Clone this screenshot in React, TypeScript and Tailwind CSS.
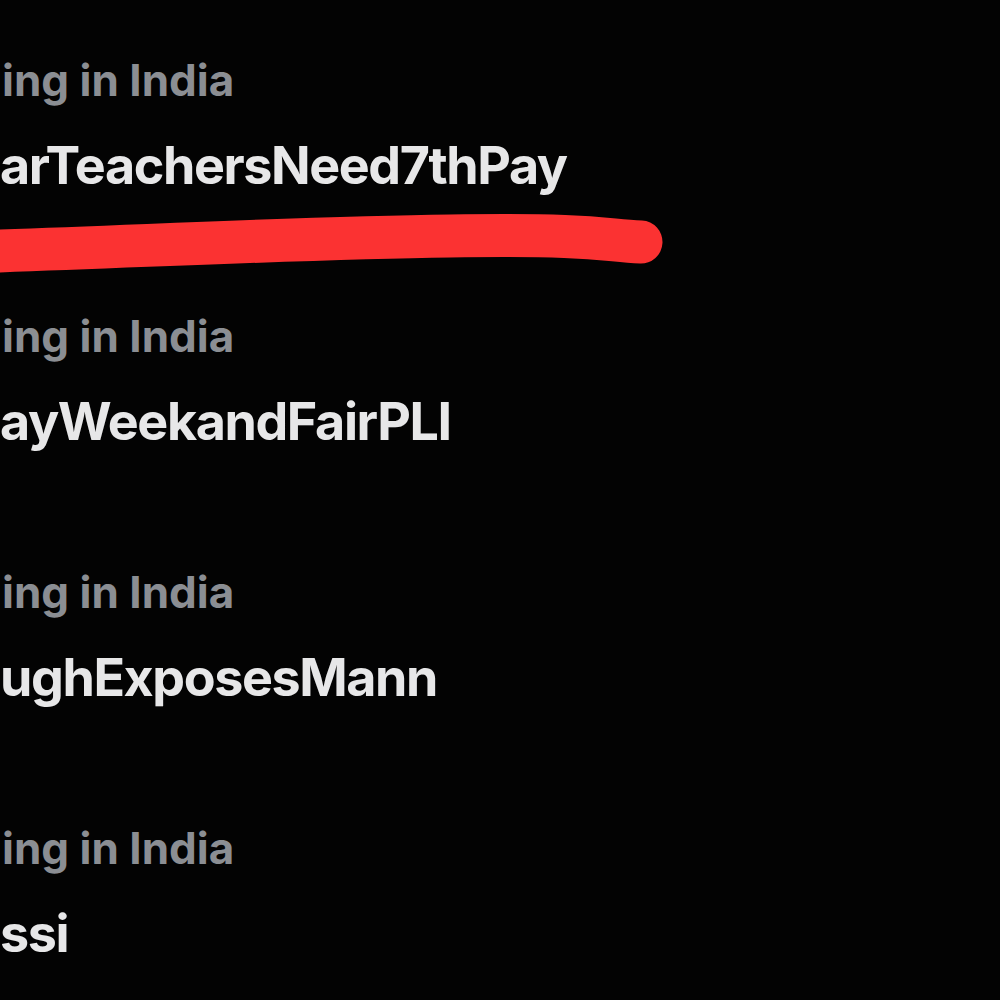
const trends = [
  { label: "ing in India", tag: "arTeachersNeed7thPay" },
  { label: "ing in India", tag: "ayWeekandFairPLI" },
  { label: "ing in India", tag: "ughExposesMann" },
  { label: "ing in India", tag: "ssi" },
];

const App = () => {
  return (
    <div
      className="relative h-[1000px] w-[1000px] overflow-hidden bg-[#030303]"
      style={{ fontFamily: "Inter, 'Open Sans', sans-serif" }}
    >
      <div className="flex flex-col pt-[58px]">
        {trends.map((t, i) => (
          <div key={i} className="flex h-[256px] flex-col gap-[38px]">
            <div className="pl-[2px] text-[44px] font-bold leading-[44px] tracking-[0px] text-[#8b8e93]">
              {t.label}
            </div>
            <div className="text-[52px] font-bold leading-[52px] tracking-[-1.4px] text-[#e7e7e8]">
              {t.tag}
            </div>
          </div>
        ))}
      </div>

      {/* red marker stroke under the first trend */}
      <svg
        className="pointer-events-none absolute left-0 top-0"
        width="1000"
        height="1000"
        viewBox="0 0 1000 1000"
      >
        <path
          d="M -30 252 C 150 246, 300 238, 450 236 S 600 240, 641 242"
          fill="none"
          stroke="#fb3232"
          strokeWidth="43"
          strokeLinecap="round"
        />
      </svg>
    </div>
  );
};

export default App;
